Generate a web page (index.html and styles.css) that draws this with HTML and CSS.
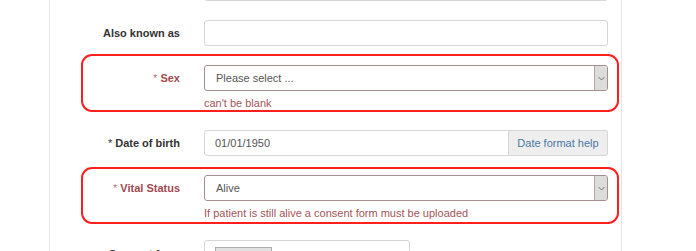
FILE: index.html
```html
<!DOCTYPE html>
<html lang="en">
<head>
    <meta charset="UTF-8">
    <title>Patient details</title>
    <link rel="stylesheet" href="styles.css">
</head>
<body>
    <div class="panel">
        <div class="row">
            <label class="label"></label>
            <div class="control"><input class="input" type="text"></div>
        </div>

        <div class="row">
            <label class="label">Also known as</label>
            <div class="control"><input class="input" type="text"></div>
        </div>

        <div class="row has-error">
            <label class="label"><span class="req">*</span> Sex</label>
            <div class="control">
                <div class="select">
                    <span class="select-text">Please select ...</span>
                    <span class="select-arrow">
                        <svg width="7" height="5" viewBox="0 0 7 5"><polyline points="0.5,1 3.5,4 6.5,1" fill="none" stroke="#777" stroke-width="1"/></svg>
                    </span>
                </div>
                <div class="help">can't be blank</div>
            </div>
        </div>

        <div class="row">
            <label class="label"><span class="req">*</span> Date of birth</label>
            <div class="control">
                <div class="input-group">
                    <input class="input" type="text" value="01/01/1950">
                    <span class="addon">Date format help</span>
                </div>
            </div>
        </div>

        <div class="row has-error vital">
            <label class="label"><span class="req">*</span> Vital Status</label>
            <div class="control">
                <div class="select">
                    <span class="select-text">Alive</span>
                    <span class="select-arrow">
                        <svg width="7" height="5" viewBox="0 0 7 5"><polyline points="0.5,1 3.5,4 6.5,1" fill="none" stroke="#777" stroke-width="1"/></svg>
                    </span>
                </div>
                <div class="help">If patient is still alive a consent form must be uploaded</div>
            </div>
        </div>

        <div class="row">
            <label class="label label-file">Consent form</label>
            <div class="control">
                <div class="file">
                    <span class="browse">Browse...</span>
                    <span class="file-name">No file selected.</span>
                </div>
            </div>
        </div>
    </div>
</body>
</html>
```

FILE: styles.css
```css
body {
    margin: 0;
    background-color: #ffffff;
    font-family: "Liberation Sans", Arial, sans-serif;
    font-size: 11px;
    color: #333333;
    overflow: hidden;
}

.panel {
    width: 559px;
    margin: -25px 0 0 49px;
    padding-right: 12px;
    border-left: 1px solid #e6e6e6;
    border-right: 1px solid #e6e6e6;
}

.row {
    display: grid;
    grid-template-columns: 130px 404px;
    column-gap: 24px;
    align-items: start;
    margin-bottom: 19px;
    position: relative;
}

.label {
    text-align: right;
    font-weight: bold;
    line-height: 26px;
}

.req {
    font-weight: normal;
}

.input {
    display: block;
    width: 100%;
    height: 26px;
    box-sizing: border-box;
    margin: 0;
    padding: 0 10px;
    border: 1px solid #d6d6d6;
    border-radius: 3px;
    font-family: inherit;
    font-size: 11px;
    color: #555555;
    background-color: #ffffff;
}

/* error groups */
.has-error {
    margin-bottom: 20px;
}

.has-error .label {
    color: #a4494f;
}

.has-error .req {
    color: #b07a7e;
}

.has-error::after {
    content: "";
    position: absolute;
    left: 31px;
    right: -10px;
    top: -11px;
    bottom: -2px;
    border: 2px solid #ff1f1f;
    border-radius: 11px;
    pointer-events: none;
}

.has-error.vital::after {
    top: -8px;
    bottom: -4px;
}

.select {
    display: flex;
    height: 26px;
    box-sizing: border-box;
    border: 1px solid #a49090;
    border-radius: 3px;
    background-color: #ffffff;
    overflow: hidden;
}

.select-text {
    flex: 1;
    padding-left: 11px;
    line-height: 24px;
    color: #555555;
}

.select-arrow {
    width: 12px;
    display: flex;
    align-items: center;
    justify-content: center;
    background-color: #dcdcdc;
    border-left: 1px solid #b5a5a5;
}

.help {
    margin-top: 5px;
    line-height: 14px;
    color: #a5555b;
}

/* date input group */
.input-group {
    display: flex;
}

.input-group .input {
    flex: 1;
    border-radius: 3px 0 0 3px;
}

.addon {
    width: 99px;
    height: 26px;
    box-sizing: border-box;
    border: 1px solid #d6d6d6;
    border-left: none;
    border-radius: 0 3px 3px 0;
    background-color: #eeeeee;
    color: #4a78a5;
    line-height: 24px;
    text-align: center;
}

/* file field */
.file {
    width: 206px;
    height: 26px;
    box-sizing: border-box;
    border: 1px solid #d6d6d6;
    border-radius: 3px;
    padding: 6px 0 0 10px;
    display: flex;
    align-items: flex-start;
    gap: 27px;
}

.browse {
    width: 57px;
    height: 18px;
    box-sizing: border-box;
    border: 1px solid #adadad;
    background-color: #e1e1e1;
    padding-left: 8px;
    line-height: 16px;
    color: #333333;
}

.file-name {
    line-height: 18px;
    color: #333333;
}

.label-file {
    line-height: 16px;
    padding-top: 6px;
}
```
